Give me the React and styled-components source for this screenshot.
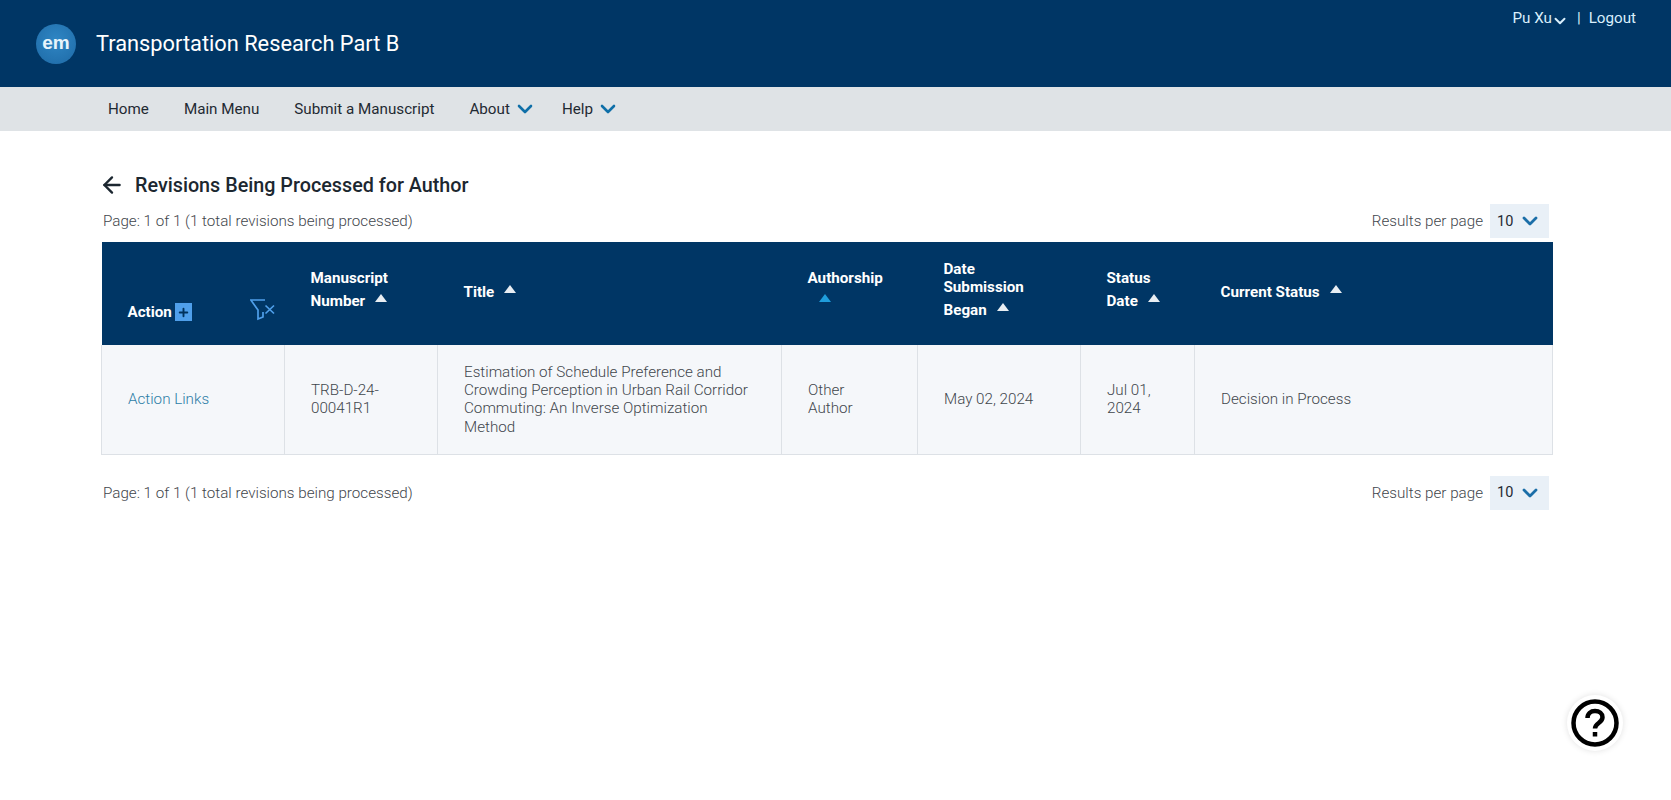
import React from "react";
import styled, { createGlobalStyle } from "styled-components";
import { ArrowLeft, ChevronDown, Plus } from "lucide-react";

const GlobalStyle = createGlobalStyle`
  html, body {
    margin: 0;
    padding: 0;
    background: #fff;
    font-family: Roboto, "Liberation Sans", sans-serif;
    color: #1f2a33;
  }
`;

const TopBar = styled.header`
  height: 87px;
  background: #003665;
  display: flex;
  justify-content: space-between;
  box-sizing: border-box;
  padding: 0 35px 0 36px;
`;
const Brand = styled.div`
  display: flex;
  align-items: center;
  gap: 20px;
`;
const Logo = styled.div`
  width: 40px;
  height: 40px;
  border-radius: 50%;
  background: radial-gradient(circle at 50% 40%, #2f86c4, #1e6aa6);
  color: #e8f4fb;
  font: 700 19px "Liberation Sans", sans-serif;
  display: flex;
  align-items: center;
  justify-content: center;
  padding-bottom: 2px;
  box-sizing: border-box;
`;
const JournalName = styled.div`
  color: #fff;
  font-size: 21.8px;
`;
const UserMenu = styled.div`
  display: flex;
  align-items: center;
  height: 36px;
  color: #d9effc;
  font-size: 15.2px;
`;
const UserChevron = styled(ChevronDown)`
  margin: 5px -2px 0 -1px;
`;
const Divider = styled.span`
  margin: 0 8px 0 10px;
`;
const Nav = styled.nav`
  height: 44px;
  background: #dfe3e6;
  display: flex;
  align-items: center;
  padding-left: 108px;
  gap: 35px;
`;
const NavItem = styled.a`
  color: #1f2a33;
  font-size: 15.2px;
  display: flex;
  align-items: center;
  gap: 3px;
`;
const NavChevron = styled(ChevronDown)`
  margin-right: -10px;
`;
const Main = styled.main`
  padding: 41px 119px 0 101px;
`;
const Heading = styled.div`
  display: flex;
  align-items: center;
  gap: 10px;
  height: 26px;
  font-size: 19.75px;
  font-weight: 500;
  color: #1c2730;
`;
const BackArrow = styled(ArrowLeft)`
  margin-left: -2px;
`;
const ListBar = styled.div`
  display: flex;
  align-items: center;
  justify-content: space-between;
  height: 34px;
  padding: 0 3px 0 2px;
  margin-top: ${(p) => p.$top}px;
  margin-bottom: ${(p) => p.$bottom}px;
`;
const Muted = styled.span`
  font-size: 15.2px;
  font-weight: 300;
  color: #3f464c;
`;
const PerPage = styled.div`
  display: flex;
  align-items: center;
  gap: 7px;
`;
const Select = styled.div`
  width: 59px;
  height: 34px;
  box-sizing: border-box;
  background: #e9f0f7;
  display: flex;
  align-items: center;
  justify-content: space-between;
  padding: 0 7px 0 7px;
  font-size: 14.5px;
  color: #1f2a33;
`;
const Table = styled.table`
  width: 1451px;
  table-layout: fixed;
  border-collapse: collapse;
`;
const HeadCell = styled.th`
  background: #003665;
  color: #fff;
  height: 103px;
  box-sizing: border-box;
  padding: 0 10px 4px 26px;
  text-align: left;
  vertical-align: middle;
  font-size: 15.2px;
  font-weight: 700;
  line-height: 18px;
`;
const ActionHeadCell = styled(HeadCell)`
  vertical-align: bottom;
  padding-bottom: 24px;
`;
const ActionHead = styled.div`
  display: flex;
  align-items: flex-end;
  justify-content: space-between;
`;
const ActionLabel = styled.span`
  display: flex;
  align-items: center;
  gap: 3px;
`;
const PlusBox = styled.span`
  width: 17px;
  height: 18px;
  background: #4f9fea;
  color: #00325c;
  display: inline-flex;
  align-items: center;
  justify-content: center;
`;
const Sort = styled.span`
  display: inline-block;
  width: 0;
  height: 0;
  margin: 0 0 6px ${(p) => p.$gap ?? 10}px;
  border-left: 6.5px solid transparent;
  border-right: 6.5px solid transparent;
  border-bottom: 8px solid ${(p) => (p.$active ? "#1f9ddb" : "#e8eef3")};
  vertical-align: middle;
`;
const SortLine = styled.span`
  display: block;
  line-height: 28px;
`;
const Cell = styled.td`
  background: #f5f7fa;
  border: 1px solid #dde1e6;
  border-top: none;
  height: 109px;
  box-sizing: border-box;
  padding: 0 26px;
  font-size: 15.2px;
  font-weight: 300;
  line-height: 18.3px;
  color: #3f464c;
`;
const ActionLink = styled.a`
  color: #2d7da6;
`;
const HelpButton = styled.button`
  position: fixed;
  left: 1567px;
  top: 695px;
  width: 56px;
  height: 56px;
  padding: 0;
  border: none;
  border-radius: 50%;
  background: #fff;
  box-shadow: 0 0 6px rgba(0, 0, 0, 0.12);
  display: flex;
  align-items: center;
  justify-content: center;
`;

const Pager = ({ top, bottom }) => (
  <ListBar $top={top} $bottom={bottom}>
    <Muted>Page: 1 of 1 (1 total revisions being processed)</Muted>
    <PerPage>
      <Muted>Results per page</Muted>
      <Select>
        10
        <ChevronDown size={24} strokeWidth={2.8} color="#1b6ea8" />
      </Select>
    </PerPage>
  </ListBar>
);

const App = () => {
  return (
    <>
      <GlobalStyle />
      <TopBar>
        <Brand>
          <Logo>em</Logo>
          <JournalName>Transportation Research Part B</JournalName>
        </Brand>
        <UserMenu>
          Pu Xu
          <UserChevron size={18} strokeWidth={2.6} />
          <Divider>|</Divider>
          Logout
        </UserMenu>
      </TopBar>
      <Nav>
        <NavItem>Home</NavItem>
        <NavItem>Main Menu</NavItem>
        <NavItem>Submit a Manuscript</NavItem>
        <NavItem>
          About <NavChevron size={24} strokeWidth={2.6} color="#0f6fa8" />
        </NavItem>
        <NavItem>
          Help <NavChevron size={24} strokeWidth={2.6} color="#0f6fa8" />
        </NavItem>
      </Nav>
      <Main>
        <Heading>
          <BackArrow size={26} strokeWidth={2.2} />
          Revisions Being Processed for Author
        </Heading>
        <Pager top={6} bottom={4} />
        <Table>
          <colgroup>
            <col width="183" />
            <col width="153" />
            <col width="344" />
            <col width="136" />
            <col width="163" />
            <col width="114" />
            <col width="358" />
          </colgroup>
          <thead>
            <tr>
              <ActionHeadCell>
                <ActionHead>
                  <ActionLabel>
                    Action
                    <PlusBox>
                      <Plus size={13} strokeWidth={3.5} />
                    </PlusBox>
                  </ActionLabel>
                  <svg width="25" height="22" viewBox="0 0 25 22" fill="none" stroke="#4f9fea" strokeWidth="1.7">
                    <path d="M15 1H0.800l7.200 10v9l5-2v-5" />
                    <path d="M15.500 6.500l8.500 8M24 6.500l-8.500 8" />
                  </svg>
                </ActionHead>
              </ActionHeadCell>
              <HeadCell>
                Manuscript
                <SortLine>
                  Number
                  <Sort />
                </SortLine>
              </HeadCell>
              <HeadCell>
                Title
                <Sort />
              </HeadCell>
              <HeadCell>
                Authorship
                <SortLine>
                  <Sort $active $gap={11} />
                </SortLine>
              </HeadCell>
              <HeadCell>
                Date
                <br />
                Submission
                <SortLine>
                  Began
                  <Sort />
                </SortLine>
              </HeadCell>
              <HeadCell>
                Status
                <SortLine>
                  Date
                  <Sort />
                </SortLine>
              </HeadCell>
              <HeadCell>
                Current Status
                <Sort />
              </HeadCell>
            </tr>
          </thead>
          <tbody>
            <tr>
              <Cell>
                <ActionLink>Action Links</ActionLink>
              </Cell>
              <Cell>TRB-D-24-00041R1</Cell>
              <Cell>
                Estimation of Schedule Preference and Crowding Perception in Urban Rail Corridor Commuting: An Inverse
                Optimization Method
              </Cell>
              <Cell>Other Author</Cell>
              <Cell>May 02, 2024</Cell>
              <Cell>Jul 01, 2024</Cell>
              <Cell>Decision in Process</Cell>
            </tr>
          </tbody>
        </Table>
        <Pager top={21} bottom={0} />
      </Main>
      <HelpButton aria-label="Help">
        <svg width="50" height="50" viewBox="0 0 50 50" fill="none" stroke="#000">
          <circle cx="25" cy="25" r="21.500" strokeWidth="4.500" />
          <path d="M17.5 20c0-4.5 3.2-7 7.5-7s7.5 2.500 7.500 6.300c0 5.700-7.500 5.700-7.500 11.200" strokeWidth="4.500" />
          <path d="M25 34v4.500" strokeWidth="4.500" />
        </svg>
      </HelpButton>
    </>
  );
};

export default App;
